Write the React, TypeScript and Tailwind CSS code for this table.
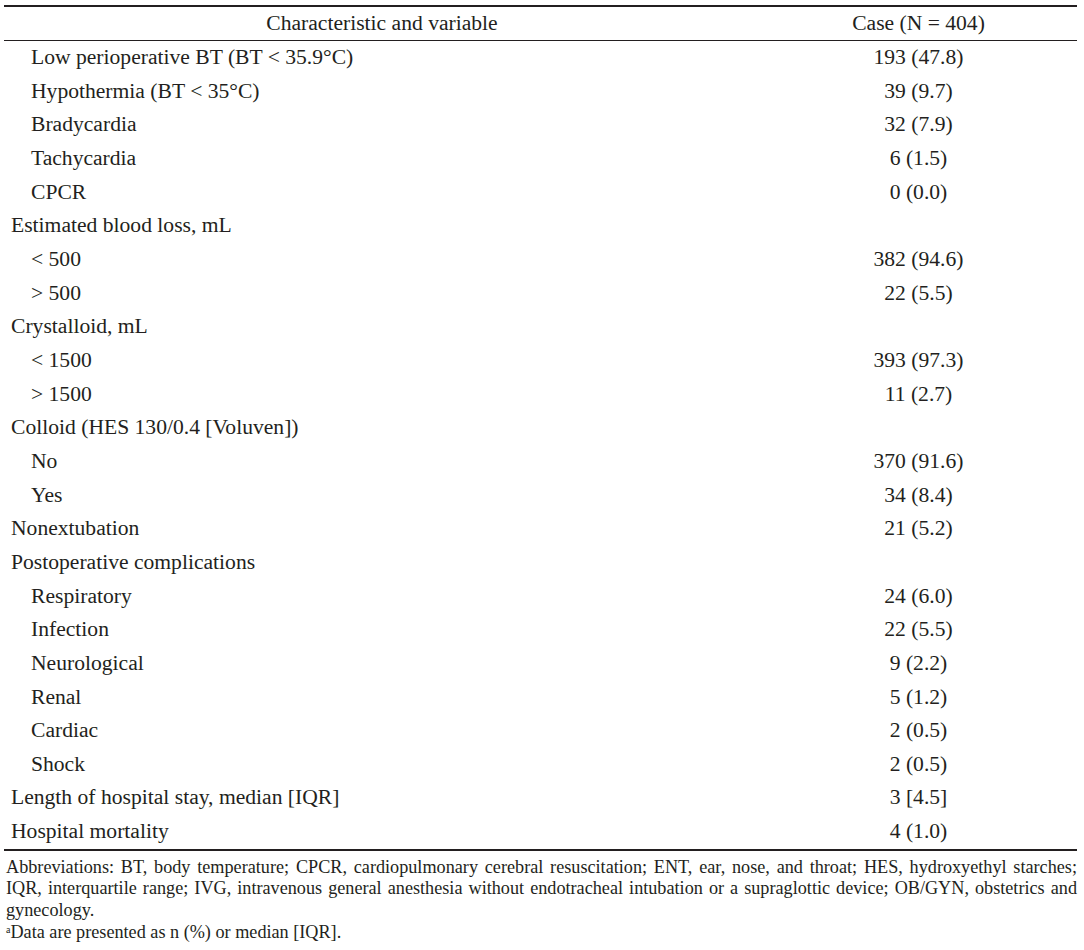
type Row = {
  label: string;
  value?: string;
  sub?: boolean;
};

const rows: Row[] = [
  { label: "Low perioperative BT (BT < 35.9°C)", value: "193 (47.8)", sub: true },
  { label: "Hypothermia (BT < 35°C)", value: "39 (9.7)", sub: true },
  { label: "Bradycardia", value: "32 (7.9)", sub: true },
  { label: "Tachycardia", value: "6 (1.5)", sub: true },
  { label: "CPCR", value: "0 (0.0)", sub: true },
  { label: "Estimated blood loss, mL" },
  { label: "< 500", value: "382 (94.6)", sub: true },
  { label: "> 500", value: "22 (5.5)", sub: true },
  { label: "Crystalloid, mL" },
  { label: "< 1500", value: "393 (97.3)", sub: true },
  { label: "> 1500", value: "11 (2.7)", sub: true },
  { label: "Colloid (HES 130/0.4 [Voluven])" },
  { label: "No", value: "370 (91.6)", sub: true },
  { label: "Yes", value: "34 (8.4)", sub: true },
  { label: "Nonextubation", value: "21 (5.2)" },
  { label: "Postoperative complications" },
  { label: "Respiratory", value: "24 (6.0)", sub: true },
  { label: "Infection", value: "22 (5.5)", sub: true },
  { label: "Neurological", value: "9 (2.2)", sub: true },
  { label: "Renal", value: "5 (1.2)", sub: true },
  { label: "Cardiac", value: "2 (0.5)", sub: true },
  { label: "Shock", value: "2 (0.5)", sub: true },
  { label: "Length of hospital stay, median [IQR]", value: "3 [4.5]" },
  { label: "Hospital mortality", value: "4 (1.0)" },
];

export default function App() {
  return (
    <div className="h-[950px] w-[1084px] bg-white font-['Liberation_Serif','Times_New_Roman',serif] text-[#231f20]">
      <div className="ml-[4px] w-[1073px] pt-[5px]">
        {/* header */}
        <div className="grid h-[36px] grid-cols-[756px_1fr] items-center border-t-2 border-b border-[#231f20] text-[21.6px]">
          <div className="text-center">Characteristic and variable</div>
          <div className="text-center">Case (N = 404)</div>
        </div>

        {/* body */}
        <div className="border-b-2 border-[#231f20]">
          {rows.map((r, i) => (
            <div
              key={i}
              className="grid h-[33.67px] grid-cols-[756px_1fr] items-center text-[21.6px] leading-none"
            >
              <div className={r.sub ? "pl-[27px]" : "pl-[7px]"}>{r.label}</div>
              <div className="text-center">{r.value}</div>
            </div>
          ))}
        </div>

        {/* notes */}
        <div className="pl-[2px] pt-[6px] text-[18.2px] leading-[21.7px]">
          <p className="text-justify [text-align-last:justify]">
            Abbreviations: BT, body temperature; CPCR, cardiopulmonary cerebral resuscitation; ENT, ear, nose, and throat; HES, hydroxyethyl starches;
          </p>
          <p className="text-justify [text-align-last:justify]">
            IQR, interquartile range; IVG, intravenous general anesthesia without endotracheal intubation or a supraglottic device; OB/GYN, obstetrics and
          </p>
          <p>gynecology.</p>
          <p>
            <sup className="relative top-[-5px] text-[10px] leading-none">a</sup>
            Data are presented as n (%) or median [IQR].
          </p>
        </div>
      </div>
    </div>
  );
}
